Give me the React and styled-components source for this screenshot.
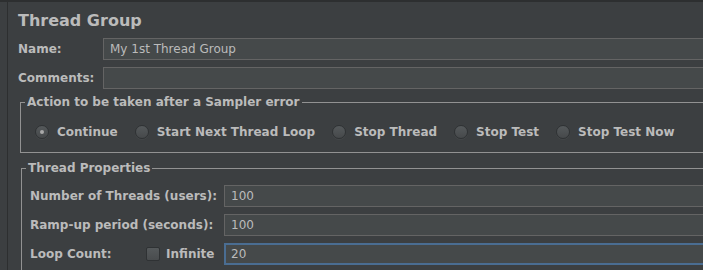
import styled, { createGlobalStyle } from 'styled-components';

const GlobalStyle = createGlobalStyle`
  html, body {
    margin: 0;
    padding: 0;
    background: #3c3f41;
    overflow: hidden;
  }
  body {
    font-family: "DejaVu Sans", "Liberation Sans", sans-serif;
    font-size: 12px;
    color: #bbbbbb;
  }
`;

const Page = styled.div`
  width: 760px;
  height: 270px;
  background: #3c3f41;
  border-top: 2px solid #2d2f30;
  box-sizing: border-box;
`;

const Panel = styled.div`
  margin-left: 7px;
  border-left: 1px solid #2d2f30;
  padding: 9px 0 0 10px;
  height: 100%;
  box-sizing: border-box;
`;

const Title = styled.h1`
  margin: 0 0 7px;
  font-size: 16px;
  line-height: 20px;
  font-weight: bold;
  color: #bbbbbb;
`;

const FormRow = styled.div`
  display: grid;
  grid-template-columns: ${p => p.$labelWidth}px 1fr;
  align-items: center;
  height: 22px;
  margin-bottom: 7px;
`;

const Label = styled.label`
  font-weight: bold;
  white-space: nowrap;
  line-height: 16px;
`;

const LoopLabel = styled(Label)`
  width: 116px;
`;

const TextInput = styled.input`
  height: 22px;
  box-sizing: border-box;
  background: #45494a;
  border: 1px solid #646464;
  border-radius: 0;
  color: #bbbbbb;
  font-family: "DejaVu Sans", "Liberation Sans", sans-serif;
  font-size: 12px;
  padding: 0 6px;
  outline: none;
  width: 100%;

  ${p => p.$focused && `
    border: 2px solid #4a6d92;
    padding: 0 5px;
  `}
`;

const Group = styled.fieldset`
  margin: ${p => p.$top}px 0 0 ${p => p.$left}px;
  padding: 0;
  border: 1px solid #929292;
  min-width: 0;
`;

const GroupBody = styled.div`
  padding: ${p => p.$pad};
`;

const Legend = styled.legend`
  margin-left: 4px;
  padding: 0 2px;
  font-weight: bold;
  font-size: 12px;
  line-height: 16px;
  color: #bbbbbb;
`;

const RadioRow = styled.div`
  display: flex;
  align-items: center;
  gap: 17px;
  height: 20px;
`;

const Option = styled.label`
  display: flex;
  align-items: center;
  gap: 8px;
  font-weight: bold;
  white-space: nowrap;
`;

const RadioDot = styled.span`
  width: 14px;
  height: 14px;
  box-sizing: border-box;
  border-radius: 50%;
  border: 1px solid #2f3234;
  background: linear-gradient(#55595b, #46494b);
  box-shadow: 0 1px 0 rgba(255, 255, 255, 0.04);
  display: flex;
  align-items: center;
  justify-content: center;

  &::after {
    content: '';
    width: 4px;
    height: 4px;
    border-radius: 50%;
    background: ${p => (p.$checked ? '#a9a9a9' : 'transparent')};
  }
`;

const CheckGroup = styled.div`
  display: flex;
  align-items: center;
`;

const CheckBox = styled.span`
  width: 14px;
  height: 14px;
  box-sizing: border-box;
  border: 1px solid #2f3234;
  border-radius: 2px;
  background: linear-gradient(#55595b, #494c4e);
  margin-right: 6px;
`;

const options = ['Continue', 'Start Next Thread Loop', 'Stop Thread', 'Stop Test', 'Stop Test Now'];

export default function App() {
  return (
    <>
      <GlobalStyle />
      <Page>
        <Panel>
          <Title>Thread Group</Title>
          <FormRow $labelWidth={85}>
            <Label>Name:</Label>
            <TextInput defaultValue="My 1st Thread Group" />
          </FormRow>
          <FormRow $labelWidth={85}>
            <Label>Comments:</Label>
            <TextInput defaultValue="" />
          </FormRow>

          <Group $top={-2} $left={2}>
            <Legend>Action to be taken after a Sampler error</Legend>
            <GroupBody $pad="12px 0 10px 14px">
              <RadioRow>
                {options.map((o, i) => (
                  <Option key={o}>
                    <RadioDot $checked={i === 0} />
                    {o}
                  </Option>
                ))}
              </RadioRow>
            </GroupBody>
          </Group>

          <Group $top={7} $left={3}>
            <Legend>Thread Properties</Legend>
            <GroupBody $pad="9px 0 0 8px">
              <FormRow $labelWidth={194}>
                <Label>Number of Threads (users):</Label>
                <TextInput defaultValue="100" />
              </FormRow>
              <FormRow $labelWidth={194}>
                <Label>Ramp-up period (seconds):</Label>
                <TextInput defaultValue="100" />
              </FormRow>
              <FormRow $labelWidth={194}>
                <CheckGroup>
                  <LoopLabel>Loop Count:</LoopLabel>
                  <CheckBox />
                  <Label>Infinite</Label>
                </CheckGroup>
                <TextInput defaultValue="20" $focused />
              </FormRow>
            </GroupBody>
          </Group>
        </Panel>
      </Page>
    </>
  );
}
